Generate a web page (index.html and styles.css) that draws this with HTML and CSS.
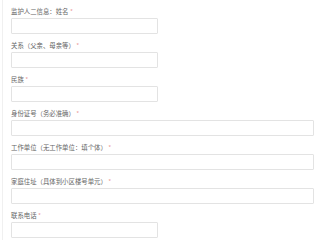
FILE: index.html
```html
<!DOCTYPE html>
<html lang="zh-CN">

<head>
    <meta charset="UTF-8">
    <meta name="viewport" content="width=device-width, initial-scale=1.0">
    <title>监护人信息</title>
    <link rel="stylesheet" href="styles.css">
</head>

<body>

    <!-- 表单面板 -->
    <div class="panel">
        <form class="info-form">
            <div class="field">
                <label for="name2">监护人二信息：姓名 <span class="req">*</span></label>
                <input type="text" id="name2" class="short">
            </div>
            <div class="field">
                <label for="relation">关系（父亲、母亲等） <span class="req">*</span></label>
                <input type="text" id="relation" class="short">
            </div>
            <div class="field">
                <label for="nation">民族 <span class="req">*</span></label>
                <input type="text" id="nation" class="short">
            </div>
            <div class="field">
                <label for="idcard">身份证号（务必准确） <span class="req">*</span></label>
                <input type="text" id="idcard" class="wide">
            </div>
            <div class="field">
                <label for="work">工作单位（无工作单位：填个体） <span class="req">*</span></label>
                <input type="text" id="work" class="wide">
            </div>
            <div class="field">
                <label for="address">家庭住址（具体到小区楼号单元） <span class="req">*</span></label>
                <input type="text" id="address" class="wide">
            </div>
            <div class="field">
                <label for="phone">联系电话 <span class="req">*</span></label>
                <input type="text" id="phone" class="short">
            </div>
        </form>
    </div>

</body>

</html>
```

FILE: styles.css
```css
/* Reset */
* {
    margin: 0;
    padding: 0;
    box-sizing: border-box;
}

body {
    font-family: "Noto Sans CJK SC", "Noto Sans", sans-serif;
    background-color: #fff;
    color: #666;
}

/* Panel */
.panel {
    margin-left: 2px;
    border-left: 1px solid #f0f0f0;
    padding: 7px 0 0 8px;
    height: 240px;
    overflow: hidden;
}

.info-form {
    display: flex;
    flex-direction: column;
    gap: 7px;
}

.field {
    display: flex;
    flex-direction: column;
    align-items: flex-start;
}

.field label {
    font-size: 6.4px;
    line-height: 10px;
    margin-bottom: 1px;
    color: #666;
}

.req {
    color: #ec9a9a;
}

.field input {
    height: 16px;
    border: 1px solid #e3e3e3;
    border-radius: 1px;
    background: #fff;
    outline: none;
}

.short {
    width: 147px;
}

.wide {
    width: 303px;
}
```
